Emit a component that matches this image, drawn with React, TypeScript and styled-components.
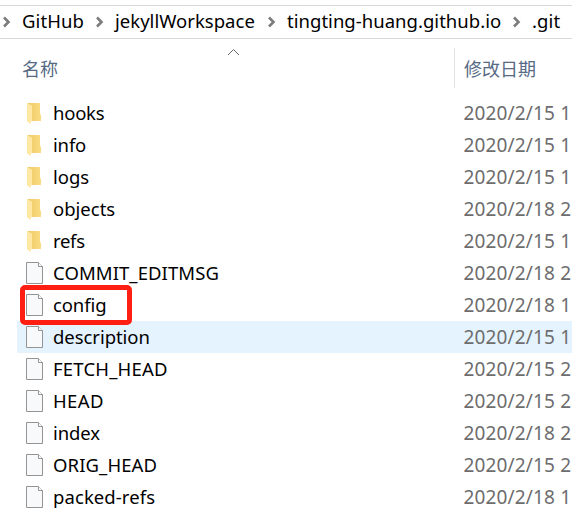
import React from "react";
import styled, { createGlobalStyle } from "styled-components";

const GlobalStyle = createGlobalStyle`
  * { box-sizing: border-box; }
  body { margin: 0; background: #fff; overflow: hidden; }
`;

const Explorer = styled.main`
  width: 572px;
  height: 527px;
  overflow: hidden;
  background: #fff;
  color: #000;
  padding-top: 5px;
  font: 18.5px/32px "Noto Sans", "Noto Sans CJK SC", sans-serif;
  white-space: nowrap;
`;

const AddressBar = styled.nav`
  display: flex;
  height: 34px;
  border-top: 1px solid #d9d9d9;
  border-bottom: 1px solid #d9d9d9;
`;

const Crumb = styled.span<{ $width: number; $spacing: number }>`
  flex: none;
  width: ${(p) => p.$width}px;
  line-height: 30px;
  letter-spacing: ${(p) => p.$spacing}px;
`;

const Chevron = styled.svg`
  flex: none;
  width: 22px;
  height: 32px;
`;

const Header = styled.header`
  display: flex;
  height: 58px;
  padding-top: 9px;
  color: #566a84;
  font: 400 18px/40px "Noto Sans CJK SC", sans-serif;
`;

const NameHeading = styled.div`
  display: flex;
  width: 455px;
  height: 40px;
  padding-left: 22px;
  border-right: 1px solid #e2e2e2;
`;

const HeadingLabel = styled.span`
  width: 205px;
`;

const DateHeading = styled.div`
  padding-left: 9px;
`;

const SortArrow = styled.svg`
  width: 13px;
  height: 8px;
`;

const FileList = styled.div`
  margin-left: 17px;
`;

const Row = styled.div<{ $active: boolean }>`
  display: flex;
  position: relative;
  height: 32px;
  background: ${(p) => (p.$active ? "#e5f3ff" : "transparent")};
`;

const Icon = styled.svg`
  flex: none;
  width: 36px;
  height: 32px;
`;

const FileName = styled.span<{ $spacing: number }>`
  flex: none;
  width: 410.5px;
  letter-spacing: ${(p) => p.$spacing}px;
`;

const Modified = styled.span`
  flex: none;
  color: #6d6d6d;
  font-size: 19px;
  letter-spacing: 0.15px;
`;

const Marker = styled.div`
  position: absolute;
  z-index: 1;
  left: 3px;
  top: -4px;
  width: 112px;
  height: 40px;
  border: 5px solid #ff1f12;
  border-radius: 5px;
`;

const crumbs = [
  { label: "GitHub", width: 71, spacing: 0.1 },
  { label: "jekyllWorkspace", width: 150, spacing: 0.02 },
  { label: "tingting-huang.github.io", width: 223, spacing: 0.03 },
  { label: ".git", width: 40, spacing: 0.1 },
];

const entries = [
  { name: "hooks", folder: true, date: "2020/2/15 1", spacing: -0.25 },
  { name: "info", folder: true, date: "2020/2/15 1", spacing: -0.15 },
  { name: "logs", folder: true, date: "2020/2/15 1", spacing: 0 },
  { name: "objects", folder: true, date: "2020/2/18 2", spacing: 0 },
  { name: "refs", folder: true, date: "2020/2/15 1", spacing: -0.3 },
  { name: "COMMIT_EDITMSG", date: "2020/2/18 2", spacing: 0.08 },
  { name: "config", date: "2020/2/18 1", spacing: -0.1, marked: true },
  { name: "description", date: "2020/2/15 1", spacing: -0.05, active: true },
  { name: "FETCH_HEAD", date: "2020/2/15 2", spacing: 0.2 },
  { name: "HEAD", date: "2020/2/15 2", spacing: 0.4 },
  { name: "index", date: "2020/2/18 2", spacing: -0.1 },
  { name: "ORIG_HEAD", date: "2020/2/15 2", spacing: 0.1 },
  { name: "packed-refs", date: "2020/2/18 1", spacing: 0.08 },
];

function FolderIcon() {
  return (
    <Icon viewBox="0 0 36 32">
      <defs>
        <linearGradient id="folder-back">
          <stop offset="0" stopColor="#edc967" />
          <stop offset="1" stopColor="#fadc80" />
        </linearGradient>
      </defs>
      <path d="M10 6h13v11l1 1v6H14z" fill="url(#folder-back)" />
      <path d="M10 6l5 2.5v15.2L14 24v3l-4-2.4z" fill="#ffe8a3" />
    </Icon>
  );
}

function DocumentIcon() {
  return (
    <Icon viewBox="0 0 36 32">
      <path d="M9.5 5.5h12l4 4v17h-16z" fill="#f8f9fa" stroke="#949494" />
      <path d="M21.5 5.5v4h4" fill="#fff" stroke="#949494" />
    </Icon>
  );
}

export default function App() {
  return (
    <Explorer>
      <GlobalStyle />
      <AddressBar>
        {crumbs.map((c) => (
          <React.Fragment key={c.label}>
            <Chevron viewBox="0 0 22 32">
              <path d="M4 11.5l4.5 4.5L4 20.5" fill="none" stroke="#7c7c7c" strokeWidth="2.6" />
            </Chevron>
            <Crumb $width={c.width} $spacing={c.spacing}>{c.label}</Crumb>
          </React.Fragment>
        ))}
      </AddressBar>
      <Header>
        <NameHeading>
          <HeadingLabel>名称</HeadingLabel>
          <SortArrow viewBox="0 0 13 8">
            <path d="M1 7l5.5-5.5L12 7" fill="none" stroke="#666" />
          </SortArrow>
        </NameHeading>
        <DateHeading>修改日期</DateHeading>
      </Header>
      <FileList>
        {entries.map((e) => (
          <Row key={e.name} $active={!!e.active}>
            {e.folder ? <FolderIcon /> : <DocumentIcon />}
            <FileName $spacing={e.spacing}>{e.name}</FileName>
            <Modified>{e.date}</Modified>
            {e.marked && <Marker />}
          </Row>
        ))}
      </FileList>
    </Explorer>
  );
}
